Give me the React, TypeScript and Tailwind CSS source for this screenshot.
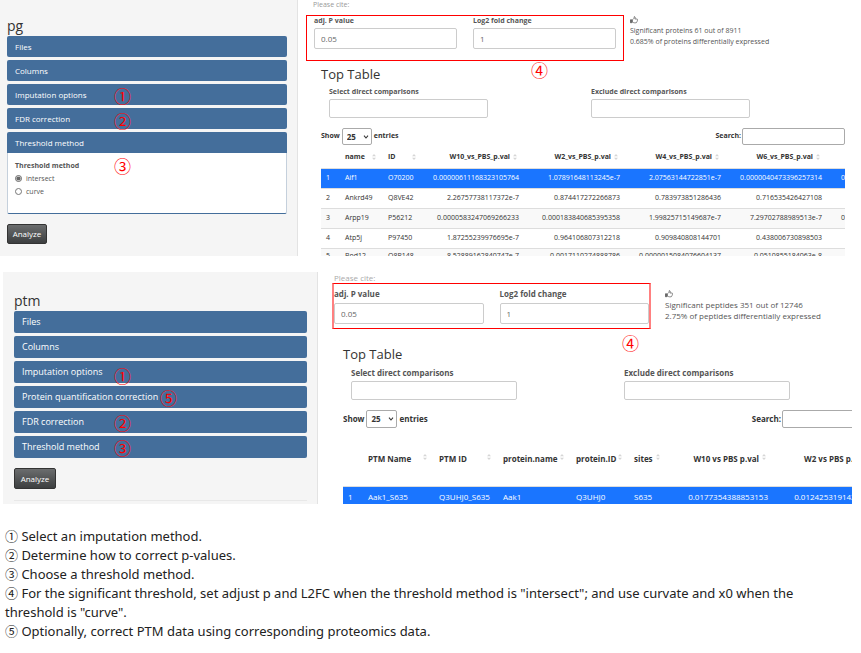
import { ReactNode } from "react";

type Cell = string;

function Mark({ children, className }: { children: string; className: string }) {
  return (
    <span
      className={`pointer-events-none absolute z-10 font-['Noto_Sans_CJK_SC','Noto_Sans',sans-serif] text-[17px] leading-[17px] text-[#f00] ${className}`}
    >
      {children}
    </span>
  );
}

function Panel({ title, size, mark, children }: { title: string; size: string; mark?: ReactNode; children?: ReactNode }) {
  return (
    <div className="relative">
      <button
        type="button"
        className={`block w-full bg-[#446e9b] px-2 text-left text-white ${children ? "rounded-t-xs" : "rounded-xs"} ${size}`}
      >
        {title}
      </button>
      {mark}
      {children}
    </div>
  );
}

function AnalyzeButton({ className }: { className: string }) {
  return (
    <button
      type="button"
      className={`rounded-xs border border-[#333] bg-linear-to-b from-[#6b6d6e] to-[#3d3f40] text-[8px] leading-[8px] text-white ${className}`}
    >
      Analyze
    </button>
  );
}

function Field({ id, label, value, labelClass, inputClass, className = "" }: {
  id: string;
  label: string;
  value?: string;
  labelClass: string;
  inputClass: string;
  className?: string;
}) {
  return (
    <div className={`flex flex-col ${className}`}>
      <label htmlFor={id} className={`font-bold whitespace-nowrap text-[#555] ${labelClass}`}>
        {label}
      </label>
      <input
        id={id}
        type="text"
        defaultValue={value}
        className={`w-full min-w-0 rounded-xs border border-[#ccc] bg-white text-[8px] text-[#666] outline-none ${inputClass}`}
      />
    </div>
  );
}

function ThumbsUp() {
  return (
    <svg viewBox="0 0 16 16" className="block size-2" fill="none" stroke="#555" strokeWidth="1.4" strokeLinejoin="round">
      <path d="M5 7.5 8 4.5 8.6 1.2c1.8 0 2.3 1.6 1.6 3.3L9.8 6H14c1 0 1.5 1.4.6 2 .5.8.3 1.6-.5 2 .3.8 0 1.5-.7 1.9.1 1-.6 1.7-1.6 1.7H8.5c-1.3 0-2-.9-3.5-.9z" />
      <path d="M1 7.5h2.400v6H1z" fill="#555" />
    </svg>
  );
}

function Summary({ lines, className }: { lines: string[]; className: string }) {
  return (
    <div className={`whitespace-nowrap leading-[11px] text-[#555] ${className}`}>
      <ThumbsUp />
      <div className="pt-px">
        {lines.map((line) => (
          <p key={line}>{line}</p>
        ))}
      </div>
    </div>
  );
}

function TableControls({ id, selectClass, searchClass, className }: {
  id: string;
  selectClass: string;
  searchClass: string;
  className: string;
}) {
  return (
    <div className={`flex items-center justify-between font-bold text-[#333] ${className}`}>
      <label htmlFor={`${id}-length`} className="flex items-center gap-[2px]">
        Show
        <span className="relative">
          <select
            id={`${id}-length`}
            defaultValue="25"
            className={`block appearance-none rounded-xs border border-[#aaa] bg-white pl-1 text-[8px] font-bold outline-none ${selectClass}`}
          >
            <option>10</option>
            <option>25</option>
            <option>50</option>
          </select>
          <svg viewBox="0 0 8 6" className="pointer-events-none absolute top-1/2 right-[3px] h-1 w-[6px] -translate-y-1/2" fill="none" stroke="#333" strokeWidth="1.6">
            <path d="M1 1l3 3.5L7 1" />
          </svg>
        </span>
        entries
      </label>
      <label htmlFor={`${id}-search`} className="flex items-center gap-px">
        Search:
        <input id={`${id}-search`} type="text" className={`rounded-xs border border-[#aaa] bg-white px-1 outline-none ${searchClass}`} />
      </label>
    </div>
  );
}

function SortIcon() {
  return (
    <svg viewBox="0 0 4 6" className="absolute top-1/2 right-[7px] h-[6px] w-1 -translate-y-1/2" fill="#d6d6d6">
      <path d="M0 2.3h4L2 0zM0 3.7h4L2 6z" />
    </svg>
  );
}

function DataTable({ widths, textColumns, head, rows, className, headClass }: {
  widths: string[];
  textColumns: number;
  head: string[];
  rows: Cell[][];
  className: string;
  headClass: string;
}) {
  return (
    <table className={`w-px table-fixed border-separate border-spacing-0 whitespace-nowrap text-[#333] ${className}`}>
      <colgroup>
        {widths.map((w, i) => (
          <col key={i} className={w} />
        ))}
      </colgroup>
      <thead>
        <tr>
          {head.map((h, i) => (
            <th
              key={i}
              scope="col"
              className={`relative border-b border-[#ddd] pr-0 pb-0 align-middle ${headClass} ${
                i < textColumns ? "pl-[5px] text-left" : "pr-[14px] pl-0 text-right"
              }`}
            >
              {h}
              {h && <SortIcon />}
            </th>
          ))}
        </tr>
      </thead>
      <tbody>
        {rows.map((row, r) => (
          <tr key={r} className={r === 0 ? "bg-[#1a75ff] text-white" : r % 2 === 0 ? "bg-[#f9f9f9]" : "bg-white"}>
            {row.map((c, i) => (
              <td
                key={i}
                className={`border-b border-[#ddd] px-[5px] py-0 align-middle ${r === 4 ? "h-[14px] leading-[13px]" : "h-5"} ${
                  i < textColumns ? "text-left" : "text-right"
                }`}
              >
                {c}
              </td>
            ))}
          </tr>
        ))}
      </tbody>
    </table>
  );
}

const proteinRows: Cell[][] = [
  ["1", "Aif1", "O70200", "0.00000611168323105764", "1.07891648113245e-7", "2.07563144722851e-7", "0.0000040473396257314", "0.0000118234705612837"],
  ["2", "Ankrd49", "Q8VE42", "2.26757738117372e-7", "0.874417272266873", "0.783973851286436", "0.716535426427108", ""],
  ["3", "Arpp19", "P56212", "0.0000583247069266233", "0.000183840685395358", "1.99825715149687e-7", "7.29702788989513e-7", "0.0000345612089541273"],
  ["4", "Atp5j", "P97450", "1.87255239976695e-7", "0.964106807312218", "0.909840808144701", "0.438006730898503", ""],
  ["5", "Bod12", "Q8R148", "8.52889162840747e-7", "0.0017110274888786", "0.0000015084076604137", "0.0510855184063e-8", ""],
];

const peptideRows: Cell[][] = [
  ["1", "Aak1_S635", "Q3UHJ0_S635", "Aak1", "Q3UHJ0", "S635", "0.0177354388853153", "0.0124253191428731"],
];

function ProteinSection() {
  return (
    <section className="grid h-[256px] grid-cols-[298px_minmax(0,1fr)] overflow-hidden">
      <aside className="border-r border-[#e3e3e3] bg-[#f5f5f5] pt-[15px] pr-[10px] pl-[7px]">
        <h2 className="text-[14px] leading-[21px] text-[#333]">pg</h2>
        <div className="flex flex-col gap-[3px]">
          <Panel title="Files" size="h-[21px] text-[8px] leading-[21px]" />
          <Panel title="Columns" size="h-[21px] text-[8px] leading-[21px]" />
          <Panel title="Imputation options" size="h-[21px] text-[8px] leading-[21px]" mark={<Mark className="top-[3px] left-[107px]">①</Mark>} />
          <Panel title="FDR correction" size="h-[21px] text-[8px] leading-[21px]" mark={<Mark className="top-1 left-[107px]">②</Mark>} />
          <Panel title="Threshold method" size="h-[21px] text-[8px] leading-[21px]" mark={<Mark className="top-[25px] left-[107px]">③</Mark>}>
            <fieldset className="h-[61px] rounded-b-xs border-x border-b border-x-[#c5d0dc] border-b-[#446e9b] bg-white px-[7px] pt-[6px] text-[7px] leading-[13px] text-[#555]">
              <legend className="float-left w-full font-bold">Threshold method</legend>
              <label className="flex w-full items-center gap-1">
                <input type="radio" name="threshold" defaultChecked className="m-0 size-[7px] accent-[#666]" />
                intersect
              </label>
              <label className="flex items-center gap-1">
                <input type="radio" name="threshold" className="m-0 size-[7px] accent-[#666]" />
                curve
              </label>
            </fieldset>
          </Panel>
        </div>
        <AnalyzeButton className="mt-[10px] block h-5 w-10" />
      </aside>

      <main className="relative min-w-0 pr-4 pl-2">
        <p className="h-[15px] pl-[7px] text-[7px] leading-[9px] text-[#999]">Please cite:</p>
        <div className="flex items-start">
          <div className="flex h-[46px] w-[318px] gap-4 border border-[#f00] px-[7px]">
            <Field id="pg-p" label="adj. P value" value="0.05" className="flex-1" labelClass="h-3 text-[7px] leading-[9px]" inputClass="h-[21px] px-[6px]" />
            <Field id="pg-fc" label="Log2 fold change" value="1" className="flex-1" labelClass="h-3 text-[7px] leading-[9px]" inputClass="h-[21px] px-[6px]" />
          </div>
          <Summary className="pt-px pl-[6px] text-[7px]" lines={["Significant proteins 61 out of 8911", "0.685% of proteins differentially expressed"]} />
        </div>
        <Mark className="top-[61px] left-[233px]">④</Mark>
        <div className="pl-[15px]">
          <h3 className="mt-[3px] text-[13px] leading-5 text-[#333]">Top Table</h3>
          <div className="flex gap-[103px] pl-2">
            <Field id="pg-select" label="Select direct comparisons" className="w-[159px]" labelClass="h-[15px] text-[7px] leading-[15px]" inputClass="h-[19px] px-1" />
            <Field id="pg-exclude" label="Exclude direct comparisons" className="w-[159px]" labelClass="h-[15px] text-[7px] leading-[15px]" inputClass="h-[19px] px-1" />
          </div>
          <TableControls id="pg" className="mt-[10px] text-[7px]" selectClass="h-[17px] w-[30px]" searchClass="h-[17px] w-[103px]" />
          <div className="overflow-hidden">
            <DataTable
              className="text-[7px]"
              headClass="h-6 pt-px"
              textColumns={3}
              widths={["w-[19px]", "w-[43px]", "w-[40px]", "w-[101px]", "w-[101px]", "w-[101px]", "w-[101px]", "w-[101px]"]}
              head={["", "name", "ID", "W10_vs_PBS_p.val", "W2_vs_PBS_p.val", "W4_vs_PBS_p.val", "W6_vs_PBS_p.val", ""]}
              rows={proteinRows}
            />
          </div>
        </div>
      </main>
    </section>
  );
}

function PeptideSection() {
  return (
    <section className="mt-4 mr-[9px] ml-[3px] grid h-[232px] grid-cols-[315px_minmax(0,1fr)] overflow-hidden">
      <aside className="border-r border-[#e3e3e3] bg-[#f5f5f5] pt-[18px] pr-[10px] pl-[11px]">
        <h2 className="text-[14px] leading-[21px] text-[#333]">ptm</h2>
        <div className="flex flex-col gap-[3px]">
          <Panel title="Files" size="h-[22px] text-[9px] leading-[22px]" />
          <Panel title="Columns" size="h-[22px] text-[9px] leading-[22px]" />
          <Panel title="Imputation options" size="h-[22px] text-[9px] leading-[22px]" mark={<Mark className="top-[6px] left-[100px]">①</Mark>} />
          <Panel title="Protein quantification correction" size="h-[22px] text-[9px] leading-[22px]" mark={<Mark className="top-[3px] left-[146px]">⑤</Mark>} />
          <Panel title="FDR correction" size="h-[22px] text-[9px] leading-[22px]" mark={<Mark className="top-[3px] left-[100px]">②</Mark>} />
          <Panel title="Threshold method" size="h-[22px] text-[9px] leading-[22px]" mark={<Mark className="top-[3px] left-[100px]">③</Mark>} />
        </div>
        <AnalyzeButton className="mt-[10px] block h-[21px] w-[42px]" />
        <hr className="mt-[11px] border-[#e8e8e8]" />
      </aside>

      <main className="relative min-w-0 pl-[14px]">
        <p className="h-[11px] pl-[2px] text-[8px] leading-3 text-[#aaa]">Please cite:</p>
        <div className="flex items-start">
          <div className="flex h-[46px] w-[319px] gap-4 border-x-2 border-y border-x-[#ff8080] border-y-[#f00]">
            <Field id="ptm-p" label="adj. P value" value="0.05" className="flex-1" labelClass="h-[19px] pt-1 text-[8px] leading-3" inputClass="h-[21px] px-[6px]" />
            <Field id="ptm-fc" label="Log2 fold change" value="1" className="flex-1" labelClass="h-[19px] pt-1 text-[8px] leading-3" inputClass="h-[21px] px-[6px]" />
          </div>
          <Summary className="pt-[7px] pl-[14px] text-[8px]" lines={["Significant peptides 351 out of 12746", "2.75% of peptides differentially expressed"]} />
        </div>
        <Mark className="top-[62px] left-[304px]">④</Mark>
        <div className="pl-[11px]">
          <h3 className="mt-[15px] text-[13px] leading-5 text-[#333]">Top Table</h3>
          <div className="mt-px flex gap-[107px] pl-2">
            <Field id="ptm-select" label="Select direct comparisons" className="w-[166px]" labelClass="h-4 text-[8px] leading-[15px]" inputClass="h-[19px] px-1" />
            <Field id="ptm-exclude" label="Exclude direct comparisons" className="w-[166px]" labelClass="h-4 text-[8px] leading-[15px]" inputClass="h-[19px] px-1" />
          </div>
          <div className="mt-[10px] overflow-hidden">
            <TableControls id="ptm" className="-mr-[38px] text-[8px]" selectClass="h-[18px] w-[31px]" searchClass="h-[18px] w-[108px]" />
          </div>
          <div className="overflow-hidden">
            <DataTable
              className="text-[8px]"
              headClass="h-[59px] pt-[3px]"
              textColumns={6}
              widths={["w-[20px]", "w-[71px]", "w-[64px]", "w-[73px]", "w-[58px]", "w-[38px]", "w-[106px]", "w-[106px]"]}
              head={["", "PTM Name", "PTM ID", "protein.name", "protein.ID", "sites", "W10 vs PBS p.val", "W2 vs PBS p.val"]}
              rows={peptideRows}
            />
          </div>
        </div>
      </main>
    </section>
  );
}

const notes = [
  "① Select an imputation method.",
  "② Determine how to correct p-values.",
  "③ Choose a threshold method.",
  "④ For the significant threshold, set adjust p and L2FC when the threshold method is \"intersect\"; and use curvate and x0 when the threshold is \"curve\".",
  "⑤ Optionally, correct PTM data using corresponding proteomics data.",
];

export default function App() {
  return (
    <div className="bg-white font-['Open_Sans','Noto_Sans_CJK_SC',sans-serif]">
      <ProteinSection />
      <PeptideSection />
      <footer className="mt-[23px] pr-9 pl-[5px] font-['Noto_Sans','Noto_Sans_CJK_SC',sans-serif] text-[13px] leading-[19px] text-[#222]">
        {notes.map((n) => (
          <p key={n}>{n}</p>
        ))}
      </footer>
    </div>
  );
}
